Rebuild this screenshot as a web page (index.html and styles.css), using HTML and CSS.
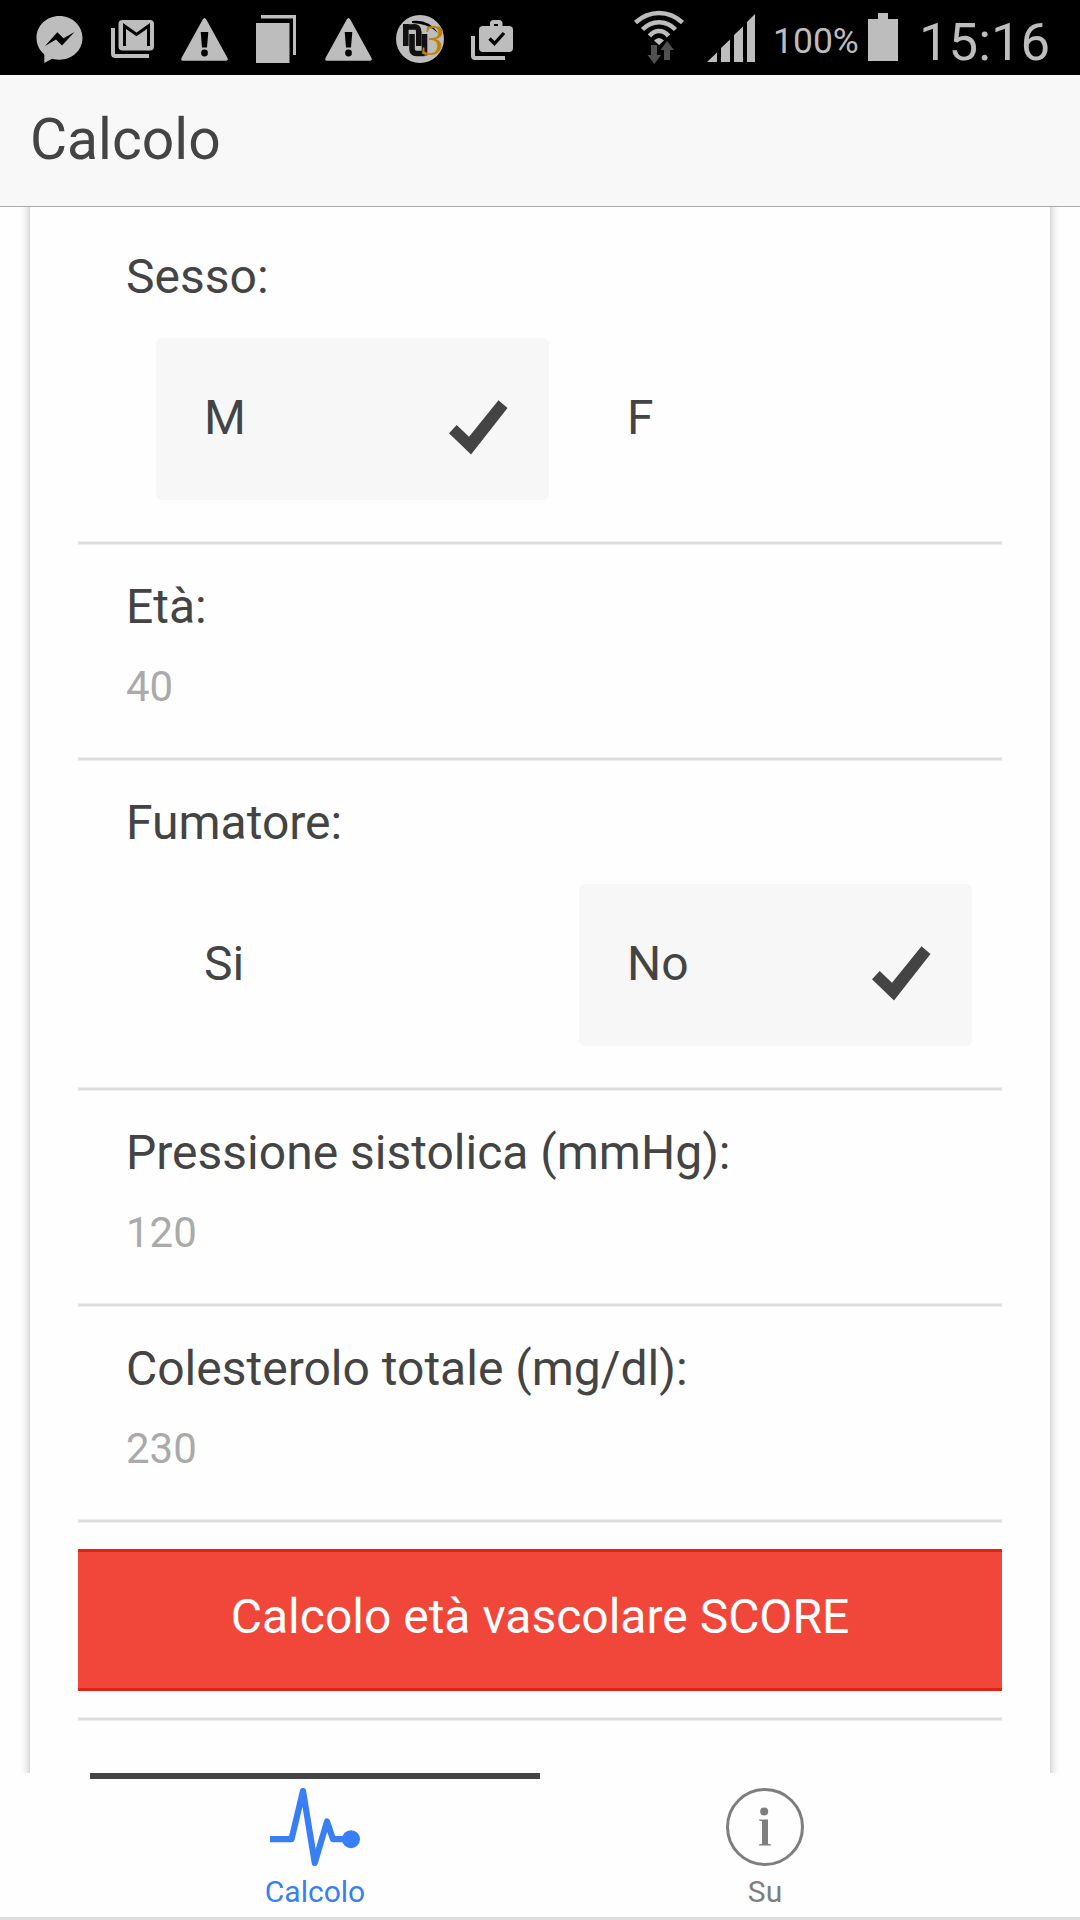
FILE: index.html
```html
<!DOCTYPE html>
<html lang="it">
<head>
<meta charset="utf-8">
<title>Calcolo</title>
<link rel="stylesheet" href="styles.css">
</head>
<body>
<div class="screen">
  <div class="status-bar">
    <div class="status-group">
      <svg width="100" height="75" viewBox="0 0 100 75"><path class="fill" d="M59.500 16C46.500 16 36.500 25.600 36.500 38c0 6.500 3 12.400 7.800 16.400V63l7.800-4.300c2.300.7 4.800 1 7.400 1C72.500 59.700 82.500 50 82.500 38S72.500 16 59.500 16z"/><path d="M45 46l12.300-13.700 6.200 6L74.500 32 62 45.500l-6-6z"/></svg>
      <svg width="68" height="75" viewBox="100 0 68 75"><path class="line" stroke-width="4" d="M113 28v25.500q0 2.500 2.500 2.500H149"/><rect class="fill" x="118.500" y="20" width="35.500" height="30.500" rx="4"/><path d="M124.500 46V26l12 8.500 12-8.500v20" fill="none" stroke="#000" stroke-width="3"/></svg>
      <svg width="72" height="75" viewBox="168 0 72 75"><path class="fill" d="M204.500 18q1 0 1.800 1.500L227.500 58q1 2.700-1.500 2.700h-43q-2.500 0-1.500-2.700l21.200-38.500q.8-1.500 1.800-1.500z"/><path d="M200.700 32h7.600l-1.300 15.500h-5z"/><circle cx="204.500" cy="53" r="3.400"/></svg>
      <svg width="72" height="75" viewBox="240 0 72 75"><path class="fill" d="M256 23h33.500v40H256z"/><path class="fill" d="M261 15h35v40h-3V18.500h-32z"/></svg>
      <svg width="72" height="75" viewBox="168 0 72 75"><path class="fill" d="M204.500 18q1 0 1.800 1.500L227.500 58q1 2.700-1.500 2.700h-43q-2.500 0-1.500-2.700l21.200-38.500q.8-1.500 1.800-1.500z"/><path d="M200.700 32h7.600l-1.300 15.500h-5z"/><circle cx="204.500" cy="53" r="3.400"/></svg>
      <svg width="72" height="75" viewBox="384 0 72 75"><circle class="fill" cx="420" cy="39" r="24"/><path d="M412 21q17-2 26 12-11-10-26-10z"/><g fill="none" stroke="#111" stroke-width="5.600"><path d="M405.800 24v22"/><path d="M407 27h6q5.800-1 5.800 5V46"/><path d="M412 34v15q0 4.500 4.500 4.500h8"/><path d="M424.500 34v21.500"/></g><text class="logo-three" x="422" y="55">3</text></svg>
      <svg width="72" height="75" viewBox="456 0 72 75"><path class="line" stroke-width="4" d="M473 36v20q0 2 2 2h30"/><rect class="fill" x="479" y="26" width="34" height="26" rx="4"/><path class="fill" d="M490 27v-3.500q0-3.500 3.500-3.500h5.500q3.500 0 3.500 3.500V27h-4.500v-3h-4v3z"/><path d="M489.500 38.500l5 5L504 33" fill="none" stroke="#000" stroke-width="3.300"/></svg>
    </div>
    <div class="status-group">
      <svg width="70" height="75" viewBox="630 0 70 75"><g class="line" stroke-width="4.500"><path d="M635.500 22.500Q646 13 659 13t23.500 9.500"/><path d="M642.500 29.500Q649.500 22.200 659 22.200t16.500 7.300"/><path d="M649.500 36Q653.500 31 659 31t9.500 5"/></g><path class="fill" d="M654 40.500q5-5 10 0L659 45z"/><path class="arrows" d="M651 45h6v10h4l-6.700 9-6.800-9H651zM664 60V50h-3.500l6.500-9 7 9h-4v10z"/></svg>
      <svg width="70" height="75" viewBox="700 0 70 75"><path class="fill" d="M707 62l10-9.500V62zM721 62V48l9-8.500V62zM734 62V35l9-8.500V62zM747 62V22l8-8v48z"/></svg>
      <span class="battery-level">100%</span>
      <svg class="battery" width="30" height="75" viewBox="868 0 30 75"><path class="fill" d="M868 19h10v-6h10v6h10v42h-30z"/></svg>
      <span class="clock">15:16</span>
    </div>
  </div>

  <header class="header">Calcolo</header>

  <main class="content">
    <form class="card">
      <div class="item first">
        <div class="label">Sesso:</div>
        <div class="options">
          <div class="option selected">M<svg class="check" width="59" height="55" viewBox="0 0 59 55"><path d="M49.500.200L58.500 8 22 54.500 0 33.300 7.700 25 20 36.800z"/></svg></div>
          <div class="option">F</div>
        </div>
      </div>
      <div class="item">
        <div class="label">Età:</div>
        <div class="value">40</div>
      </div>
      <div class="item">
        <div class="label">Fumatore:</div>
        <div class="options">
          <div class="option">Si</div>
          <div class="option selected">No<svg class="check" width="59" height="55" viewBox="0 0 59 55"><path d="M49.500.200L58.500 8 22 54.500 0 33.300 7.700 25 20 36.800z"/></svg></div>
        </div>
      </div>
      <div class="item">
        <div class="label">Pressione sistolica (mmHg):</div>
        <div class="value">120</div>
      </div>
      <div class="item">
        <div class="label">Colesterolo totale (mg/dl):</div>
        <div class="value">230</div>
      </div>
      <div class="action">
        <button class="submit" type="button">Calcolo età vascolare SCORE</button>
      </div>
    </form>
  </main>

  <nav class="tabs">
    <div class="tab active">
      <svg width="90" height="78" viewBox="0 0 90 78"><path d="M0 51.200h21.500L33 3l11.800 72L57 33.500l6 17.700h14" fill="none" stroke="currentColor" stroke-width="6.200" stroke-linejoin="round"/><circle cx="81" cy="51.200" r="9" fill="currentColor"/></svg>
      <span class="tab-title">Calcolo</span>
    </div>
    <div class="tab">
      <svg width="78" height="78" viewBox="0 0 78 78"><circle cx="39" cy="39" r="37.500" fill="none" stroke="currentColor" stroke-width="3"/><circle cx="38.200" cy="23.500" r="4" fill="currentColor"/><path d="M33 31.500h9v24.300l3 .7v1H33v-1l3-.7V33.200l-3-.7z" fill="currentColor"/></svg>
      <span class="tab-title">Su</span>
    </div>
  </nav>
</div>
</body>
</html>
```
FILE: styles.css
```css
* { box-sizing: border-box; }

body {
  margin: 0;
  font-family: Roboto, sans-serif;
  color: #444;
  background: #fefefe;
}

.screen {
  display: flex;
  flex-direction: column;
  width: 1080px;
  height: 1920px;
  overflow: hidden;
}

.status-bar {
  display: flex;
  justify-content: space-between;
  flex: none;
  height: 75px;
  padding-right: 30px;
  background: #000;
  color: #bdbdbd;
}

.status-group { display: flex; }
.status-group svg { flex: none; display: block; }
.fill { fill: #bdbdbd; }
.line { fill: none; stroke: #bdbdbd; }
.arrows { fill: #505050; }
.logo-three { font: italic 44px "Liberation Serif", serif; fill: #c08000; }

.battery-level {
  width: 98px;
  padding-left: 3px;
  font-size: 35.5px;
  line-height: 83px;
}

.clock {
  width: 152px;
  padding-left: 21px;
  font-size: 52.7px;
  line-height: 84px;
}

.header {
  flex: none;
  height: 132px;
  padding-left: 30px;
  border-bottom: 1px solid #aaa;
  background: #f8f8f8;
  font-size: 57px;
  line-height: 129px;
}

.content {
  flex: none;
  height: 1566px;
  padding: 0 30px;
  overflow: hidden;
}

/* The card is scrolled so that its top edge is out of view */
.card {
  height: 1700px;
  margin-top: -30px;
  padding: 30px 48px 0;
  background: #fefefe;
  box-shadow: 0 3px 9px rgba(0, 0, 0, 0.3);
}

/* Hairline divider with softened edges */
.item, .action {
  background: linear-gradient(#eee 1px, #ddd 1px 3px, #eee 3px) bottom / 100% 4px no-repeat;
}

.item {
  padding: 31px 30px 45px 48px;
}
.item.first { padding-top: 39px; }

.label {
  font-size: 48px;
  line-height: 62px;
}

.value {
  margin: 21px 0 1px;
  font-size: 42px;
  line-height: 56px;
  color: #aaa;
}

.options {
  display: grid;
  grid-template-columns: 1fr 1fr;
  gap: 30px;
  margin-top: 30px;
  padding-left: 30px;
}

.option {
  display: flex;
  justify-content: space-between;
  height: 162px;
  padding: 0 41.5px 0 48px;
  border-radius: 6px;
  font-size: 48px;
  line-height: 160px;
}
.option.selected { background: #f7f7f7; }

.check { margin-top: 62px; fill: #444; }

.action { padding: 26px 0 30px; }

.submit {
  display: block;
  width: 100%;
  height: 142px;
  padding: 0 0 8px;
  border: solid #e42112;
  border-width: 3px 0;
  background: #f0473a;
  color: #fff;
  font: 48px Roboto, sans-serif;
}

.tabs {
  display: flex;
  flex: 1;
  padding: 0 90px;
  border-bottom: 3px solid #ddd;
}

.tab {
  display: flex;
  flex-direction: column;
  align-items: center;
  flex: 1;
  padding-top: 9px;
  border-top: 6px solid transparent;
  color: #7e7e7e;
}
.tab.active { border-top-color: #444; color: #387ef5; }

.tab-title {
  margin-top: 8px;
  font-size: 30px;
  line-height: 36px;
}
```
